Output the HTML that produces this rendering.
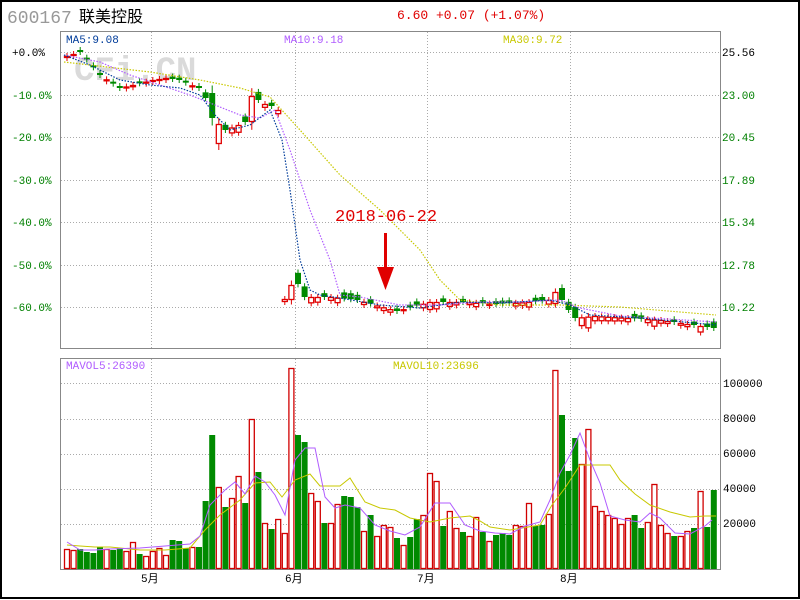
<!DOCTYPE html>
<html><head><meta charset="utf-8"><style>
html,body{margin:0;padding:0;background:#fff}
#w{position:relative;width:800px;height:600px;overflow:hidden;font-family:"Liberation Mono","Noto Sans CJK SC",monospace}
svg{position:absolute;left:0;top:0}
text{font-family:"Liberation Mono","Noto Sans CJK SC",monospace}
</style></head><body><div id="w">
<svg id="s" width="800" height="600" xmlns="http://www.w3.org/2000/svg">
<rect x="1" y="1" width="798" height="597" fill="#fff" stroke="#000" stroke-width="2"/>
<text x="7" y="23" font-family="Liberation Sans,sans-serif" font-size="18" fill="#999">600167</text>
<text x="79" y="22" font-family="Liberation Sans,Noto Sans CJK SC,sans-serif" font-size="16" fill="#000">联美控股</text>
<text x="397" y="19" font-size="13" fill="#e00000">6.60 +0.07 (+1.07%)</text>
<g id="grid" stroke="#aaa" stroke-dasharray="1 2" stroke-width="1"></g>
<rect x="60.5" y="31.5" width="660" height="317" fill="none" stroke="#888"/>
<rect x="60.5" y="358.5" width="660" height="211" fill="none" stroke="#888"/>
<text x="74" y="80" font-family="Liberation Sans,sans-serif" font-weight="bold" font-size="34" fill="#dadada">CFi.CN</text>
<text x="66" y="43" font-size="11" fill="#003c9a">MA5:9.08</text>
<text x="284" y="43" font-size="11" fill="#b05cff">MA10:9.18</text>
<text x="503" y="43" font-size="11" fill="#c8c800">MA30:9.72</text>
<text x="66" y="369" font-size="11" fill="#b05cff">MAVOL5:26390</text>
<text x="393" y="369" font-size="11" fill="#c8c800">MAVOL10:23696</text>
<g font-size="11">
<text x="12" y="56" fill="#000">+0.0%</text>
<text x="12" y="99" fill="#008000">-10.0%</text>
<text x="12" y="141" fill="#008000">-20.0%</text>
<text x="12" y="184" fill="#008000">-30.0%</text>
<text x="12" y="226" fill="#008000">-40.0%</text>
<text x="12" y="269" fill="#008000">-50.0%</text>
<text x="12" y="311" fill="#008000">-60.0%</text>
<text x="722" y="56" fill="#000">25.56</text>
<text x="722" y="99" fill="#008000">23.00</text>
<text x="722" y="141" fill="#008000">20.45</text>
<text x="722" y="184" fill="#008000">17.89</text>
<text x="722" y="226" fill="#008000">15.34</text>
<text x="722" y="269" fill="#008000">12.78</text>
<text x="722" y="311" fill="#008000">10.22</text>
<text x="723" y="387" fill="#000">100000</text>
<text x="723" y="422" fill="#000">80000</text>
<text x="723" y="457" fill="#000">60000</text>
<text x="723" y="492" fill="#000">40000</text>
<text x="723" y="527" fill="#000">20000</text>
<text x="141" y="582" fill="#000">5月</text>
<text x="285" y="582" fill="#000">6月</text>
<text x="417" y="582" fill="#000">7月</text>
<text x="560" y="582" fill="#000">8月</text>
</g>
<g id="bars"></g>
<g fill="none" stroke-width="1.2" stroke-dasharray="1.5 1.5">
<polyline stroke="#c8c800" points="64,62 150,72 200,80 240,88 270,97 300,130 340,175 380,210 420,250 440,280 460,300 500,305 560,305 620,307 716,315"/>
<polyline stroke="#b05cff" points="64,55 100,62 130,75 160,85 190,95 215,105 240,115 260,118 275,110 290,150 310,210 330,260 340,295 360,297 400,305 440,305 480,302 520,302 560,300 580,308 620,316 716,322"/>
<polyline stroke="#003c9a" points="64,55 90,65 120,80 150,85 180,88 200,95 215,115 230,130 250,125 270,110 282,140 290,190 300,260 310,290 320,295 340,298 380,305 420,308 460,302 500,303 550,300 570,305 590,315 640,318 716,325"/>
</g>
<g fill="none" stroke-width="1">
<polyline stroke="#c8c800" points="67,545 80,546 95,547 110,547 140,550 165,550 190,548 205,530 220,515 240,500 255,483 270,482 282,497 295,480 310,474 320,486 340,486 350,478 365,502 380,508 395,510 410,518 430,522 450,518 470,516 480,521 490,527 510,530 540,525 552,505 565,488 580,465 600,465 610,465 620,480 635,494 650,505 670,512 690,517 705,516 716,516"/>
<polyline stroke="#b05cff" points="67,542 80,550 95,550 110,549 140,548 165,546 190,544 200,536 210,505 225,490 235,482 245,494 255,476 265,482 275,495 285,515 295,460 305,448 315,448 325,497 335,508 345,505 360,508 375,525 390,531 405,535 420,527 435,503 450,503 465,525 480,531 495,533 510,534 525,526 540,522 550,500 560,473 570,455 580,433 590,460 600,483 610,516 625,520 640,522 650,513 660,518 675,533 690,534 705,526 712,520"/>
</g>
<text x="335" y="221" font-family="Liberation Sans,sans-serif" font-size="17" fill="#e00000">2018-06-22</text>
<rect x="384" y="233" width="3" height="40" fill="#e00000"/>
<polygon points="377,267 394,267 385.5,290" fill="#e00000"/>
</svg>
<script>
(function(){
var NS="http://www.w3.org/2000/svg";
function el(p,n,a){var e=document.createElementNS(NS,n);for(var k in a)e.setAttribute(k,a[k]);p.appendChild(e);return e;}
var g=document.getElementById('grid');
[52,95,137,180,222,265,307,383,419,454,489,524].forEach(function(y){el(g,'line',{x1:61,x2:720,y1:y+.5,y2:y+.5});});
[151,295,427,570].forEach(function(x){el(g,'line',{x1:x+.5,x2:x+.5,y1:32,y2:348});el(g,'line',{x1:x+.5,x2:x+.5,y1:359,y2:569});});
var v="r549 r550 g549 g552 g553 g547 r549 g550 g548 r551 r542 g554 r556 r551 r548 r555 g540 g541 g548 r547 g547 g501 g435 r487 g507 r498 r476 g503 r419 g472 r523 g529 r519 r533 r368 g435 g442 r493 r501 g523 r523 r504 g496 g497 g507 r531 g515 r536 r525 r527 g538 r545 g537 g519 r515 r473 r481 g526 r511 r528 g532 r536 r517 g532 r541 g535 g533 g535 r525 r526 r503 g526 g525 r514 r370 g415 g471 g438 r464 r429 r506 r511 r515 r518 r524 r518 g515 g528 r522 r484 r525 r533 g536 r536 r531 g528 r491 g527 g490".split(" ");
var kp=[[0,56],[2,52],[5,75],[8,88],[10,85],[13,80],[15,78],[17,80],[20,88],[21,98],[22,118],[24,130],[26,125],[27,122],[28,96],[29,100],[30,104],[31,106],[32,110],[33,299],[34,285],[35,284],[36,297],[40,297],[44,300],[50,311],[55,302],[60,302],[65,304],[70,302],[73,300],[74,292],[75,300],[76,310],[77,318],[80,316],[90,320],[98,328]];
function cy(i){for(var k=0;k<kp.length-1;k++){if(i>=kp[k][0]&&i<=kp[k+1][0]){var t=(i-kp[k][0])/(kp[k+1][0]-kp[k][0]);return kp[k][1]+t*(kp[k+1][1]-kp[k][1]);}}return 328;}
var b=document.getElementById('bars');
for(var i=0;i<v.length;i++){
 var up=v[i][0]=='r',top=+v[i].slice(1),x=64+i*6.6,col=up?'#e00000':'#008a00';
 var h=Math.max(1,569-top);
 if(up)el(b,'rect',{x:x+.5,y:top+.5,width:5,height:h-1,fill:'#fff',stroke:'#d00000','stroke-width':1.3});
 else el(b,'rect',{x:x,y:top,width:6,height:h,fill:'#008a00'});
 var c=cy(i),bh=Math.max(2,Math.min(12,(569-top)/12));if(i==34)bh=15;if(i==22)bh=25;if(i==28)bh=26;if(i==23)bh=20;
 var yt=up?c:c-bh,wy=Math.max(3,bh*0.3);
 el(b,'line',{x1:x+3,x2:x+3,y1:yt-wy,y2:yt+bh+wy,stroke:col,'stroke-width':1});
 if(up)el(b,'rect',{x:x+.5,y:yt+.5,width:5,height:Math.max(1,bh-1),fill:'#fff',stroke:col,'stroke-width':1.3});
 else el(b,'rect',{x:x,y:yt,width:6,height:bh,fill:col});
}
})();
</script>
</div></body></html>
